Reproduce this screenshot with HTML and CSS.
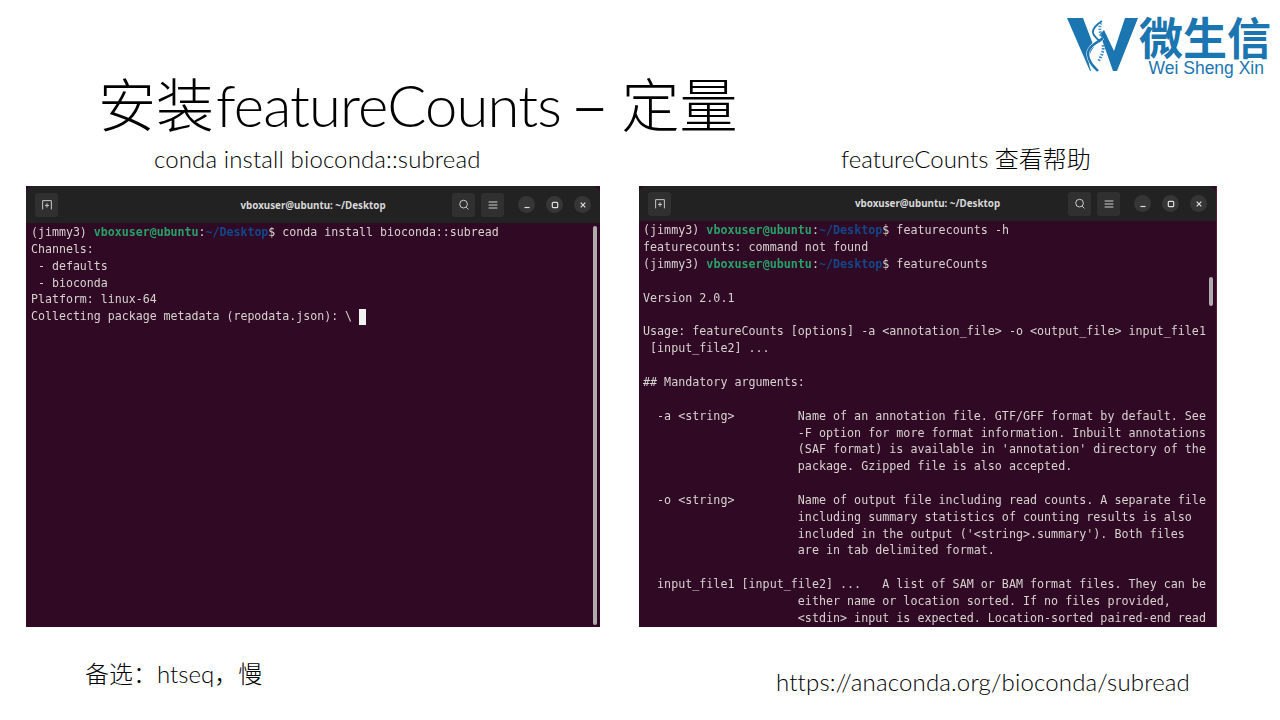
FILE: index.html
```html
<!DOCTYPE html>
<html lang="zh">
<head>
<meta charset="utf-8">
<title>安装featureCounts</title>
<link rel="stylesheet" href="styles.css">
</head>
<body>
<main class="slide">
  <header class="head">
    <h1 class="title">安装<span class="title-latin">featureCounts</span> <span class="title-dash">–</span> 定量</h1>
    <div class="logo">
      <svg class="logo-mark" viewBox="0 0 72 54" width="72" height="54" aria-hidden="true">
        <path fill="#1a75b0" d="M0 0H16L27 29C22 35 20 42 24 53H23Z"/>
        <path fill="#1a75b0" d="M33 16L37 12L47 33L58 0H71L50 53H46Z"/>
        <path fill="none" stroke="#fff" stroke-width="3.4" d="M36 20C30 25 21 28 21 36C21 43 26 48 31 53"/>
        <path fill="none" stroke="#1a75b0" stroke-width="2.4" d="M36 20C30 25 21 28 21 36C21 43 26 48 31 53"/>
        <path fill="none" stroke="#1a75b0" stroke-width="1.8" d="M35 3C30 6 25 11 26 15C27 19 31 21 33 24"/>
        <path fill="none" stroke="#3f8fc2" stroke-width="3" stroke-dasharray="1.4 1.5" d="M34 5C32 9 33 13 34 18"/>
        <path fill="none" stroke="#3f8fc2" stroke-width="3" stroke-dasharray="1.6 1.4" d="M36 27C37 33 34 39 31 44"/>
      </svg>
      <div class="logo-text">
        <div class="logo-cn">微生信</div>
        <div class="logo-en">Wei Sheng Xin</div>
      </div>
    </div>
  </header>

  <section class="panels">
    <div class="panel">
      <p class="caption caption-left">conda install bioconda::subread</p>
      <div class="term term-left">
        <div class="bar">
          <div class="bar-side">
            <span class="btn"><svg viewBox="0 0 16 16" width="14" height="14"><path d="M3 13V3H13V13M8 6V11M5.7 8.5H10.3" fill="none" stroke="#cfcfcf" stroke-width="1.1"/></svg></span>
          </div>
          <span class="bar-title">vboxuser@ubuntu: ~/Desktop</span>
          <div class="bar-side bar-end">
            <span class="btn"><svg viewBox="0 0 16 16" width="14" height="14"><circle cx="7.5" cy="7" r="4.4" fill="none" stroke="#cfcfcf" stroke-width="1.1"/><path d="M10.5 10.5L13 13" stroke="#cfcfcf" stroke-width="1.1"/></svg></span>
            <span class="btn"><svg viewBox="0 0 16 16" width="14" height="14"><path d="M3 4.5H13M3 8H13M3 11.5H13" stroke="#cfcfcf" stroke-width="1.2"/></svg></span>
            <span class="wbtn wbtn-first"><svg viewBox="0 0 10 10" width="10" height="10"><path d="M2.5 7.5H7.5" stroke="#e0e0e0" stroke-width="1.2"/></svg></span>
            <span class="wbtn"><svg viewBox="0 0 10 10" width="10" height="10"><rect x="2.3" y="2.3" width="5.4" height="5.4" rx="1" fill="none" stroke="#e0e0e0" stroke-width="1.2"/></svg></span>
            <span class="wbtn"><svg viewBox="0 0 10 10" width="10" height="10"><path d="M2.7 2.7L7.3 7.3M7.3 2.7L2.7 7.3" stroke="#e0e0e0" stroke-width="1.2"/></svg></span>
          </div>
        </div>
        <div class="screen">
<pre class="out">(jimmy3) <b class="g">vboxuser@ubuntu</b>:<b class="b">~/Desktop</b>$ conda install bioconda::subread
Channels:
 - defaults
 - bioconda
Platform: linux-64
Collecting package metadata (repodata.json): \ <span class="cursor"> </span></pre>
          <span class="thumb thumb-left"></span>
        </div>
      </div>
    </div>
    <div class="panel">
      <p class="caption caption-right">featureCounts 查看帮助</p>
      <div class="term term-right">
        <div class="bar">
          <div class="bar-side">
            <span class="btn"><svg viewBox="0 0 16 16" width="14" height="14"><path d="M3 13V3H13V13M8 6V11M5.7 8.5H10.3" fill="none" stroke="#cfcfcf" stroke-width="1.1"/></svg></span>
          </div>
          <span class="bar-title">vboxuser@ubuntu: ~/Desktop</span>
          <div class="bar-side bar-end">
            <span class="btn"><svg viewBox="0 0 16 16" width="14" height="14"><circle cx="7.5" cy="7" r="4.4" fill="none" stroke="#cfcfcf" stroke-width="1.1"/><path d="M10.5 10.5L13 13" stroke="#cfcfcf" stroke-width="1.1"/></svg></span>
            <span class="btn"><svg viewBox="0 0 16 16" width="14" height="14"><path d="M3 4.5H13M3 8H13M3 11.5H13" stroke="#cfcfcf" stroke-width="1.2"/></svg></span>
            <span class="wbtn wbtn-first"><svg viewBox="0 0 10 10" width="10" height="10"><path d="M2.5 7.5H7.5" stroke="#e0e0e0" stroke-width="1.2"/></svg></span>
            <span class="wbtn"><svg viewBox="0 0 10 10" width="10" height="10"><rect x="2.3" y="2.3" width="5.4" height="5.4" rx="1" fill="none" stroke="#e0e0e0" stroke-width="1.2"/></svg></span>
            <span class="wbtn"><svg viewBox="0 0 10 10" width="10" height="10"><path d="M2.7 2.7L7.3 7.3M7.3 2.7L2.7 7.3" stroke="#e0e0e0" stroke-width="1.2"/></svg></span>
          </div>
        </div>
        <div class="screen">
<pre class="out">(jimmy3) <b class="g">vboxuser@ubuntu</b>:<b class="b">~/Desktop</b>$ featurecounts -h
featurecounts: command not found
(jimmy3) <b class="g">vboxuser@ubuntu</b>:<b class="b">~/Desktop</b>$ featureCounts

Version 2.0.1

Usage: featureCounts [options] -a &lt;annotation_file&gt; -o &lt;output_file&gt; input_file1
 [input_file2] ...

## Mandatory arguments:

  -a &lt;string&gt;         Name of an annotation file. GTF/GFF format by default. See
                      -F option for more format information. Inbuilt annotations
                      (SAF format) is available in 'annotation' directory of the
                      package. Gzipped file is also accepted.

  -o &lt;string&gt;         Name of output file including read counts. A separate file
                      including summary statistics of counting results is also
                      included in the output ('&lt;string&gt;.summary'). Both files
                      are in tab delimited format.

  input_file1 [input_file2] ...   A list of SAM or BAM format files. They can be
                      either name or location sorted. If no files provided,
                      &lt;stdin&gt; input is expected. Location-sorted paired-end read</pre>
          <span class="thumb thumb-right"></span>
        </div>
      </div>
    </div>
  </section>

  <footer class="foot">
    <p class="note">备选：htseq，慢</p>
    <p class="url">https://anaconda.org/bioconda/subread</p>
  </footer>
</main>
</body>
</html>
```
FILE: styles.css
```css
* { box-sizing: border-box; }
html, body { margin: 0; padding: 0; background: #fff; }
body { width: 1280px; height: 720px; overflow: hidden; font-family: "Lato", "Noto Sans CJK SC", sans-serif; color: #1a1a1a; }
p, h1 { margin: 0; font-weight: 300; }
.slide { width: 1280px; height: 720px; display: flex; flex-direction: column; }

.head { height: 146px; display: flex; justify-content: space-between; align-items: flex-start; padding-left: 98px; padding-right: 10px; }
.title { margin-top: 65px; font-size: 58px; line-height: 80px; font-weight: 300; color: #000; white-space: nowrap; }
.title-latin { margin-left: 2px; letter-spacing: -0.85px; }
.title-dash { margin-left: -3px; font-family: "Open Sans", sans-serif; font-size: 64px; line-height: 64px; }
.logo { margin-top: 14px; display: flex; align-items: flex-start; color: #1a75b0; width: 203px; }
.logo-mark { flex: none; margin-top: 4px; }
.logo-text { display: flex; flex-direction: column; align-items: flex-end; }
.logo-cn { font-family: "Noto Sans CJK SC", sans-serif; font-weight: 700; font-size: 44px; line-height: 44px; white-space: nowrap; }
.logo-en { font-family: "Liberation Sans", sans-serif; font-size: 17.5px; line-height: 20px; white-space: nowrap; margin-right: 7px; }

.panels { display: grid; grid-template-columns: 574px 578px; column-gap: 39px; padding-left: 26px; }
.caption { height: 40px; font-size: 24px; line-height: 26px; color: #000; white-space: nowrap; }
.caption-left { padding-left: 128px; letter-spacing: 0.13px; }
.caption-right { padding-left: 202px; }

.term { height: 441px; background: #300a24; display: flex; flex-direction: column; overflow: hidden; }
.term-right { border-right: 1px solid #5a1a22; }
.bar { flex: none; display: grid; grid-template-columns: 1fr auto 1fr; align-items: center; background: #222; border-radius: 8px 8px 0 0; padding: 0 9px; }
.term-left .bar { height: 37px; }
.term-right .bar { height: 35px; }
.bar-side { display: flex; align-items: center; }
.bar-end { justify-content: flex-end; }
.btn { flex: none; width: 23px; height: 24px; margin-left: 6px; border-radius: 3px; background: #303030; display: flex; align-items: center; justify-content: center; }
.bar-side:first-child .btn { margin-left: 0; }
.bar-title { text-align: center; font-family: "Noto Sans", sans-serif; font-weight: 700; font-size: 9.8px; color: #d8d8d8; white-space: nowrap; }
.term-left .bar-title { padding-top: 2px; }
.wbtn { flex: none; width: 17px; height: 17px; margin-left: 11px; border-radius: 50%; background: #363636; display: flex; align-items: center; justify-content: center; }
.wbtn-first { margin-left: 14px; }

.screen { position: relative; flex: 1; min-height: 0; overflow: hidden; }
.out { margin: 0; font-family: "DejaVu Sans Mono", monospace; font-size: 11.6px; line-height: 16.85px; color: #d6d3cf; filter: blur(0.3px); white-space: pre; }
.term-left .out { padding: 1px 0 0 5px; }
.term-right .out { padding: 1.4px 0 0 4px; font-size: 11.7px; }
.g { color: #26a269; font-weight: 700; }
.b { color: #12488b; font-weight: 700; }
.cursor { display: inline-block; width: 7px; height: 16px; background: #f2f2f2; vertical-align: -1px; }
.thumb { position: absolute; right: 3px; width: 4px; border-radius: 2px; background: #b0acac; }
.thumb-left { top: 3px; bottom: 2px; }
.thumb-right { top: 56px; height: 29px; }

.foot { display: flex; justify-content: space-between; padding-left: 85px; padding-right: 90px; }
.note { margin-top: 32px; font-size: 24px; line-height: 30px; color: #000; }
.url { margin-top: 40px; font-size: 24px; line-height: 30px; color: #000; letter-spacing: 0.16px; }
```
